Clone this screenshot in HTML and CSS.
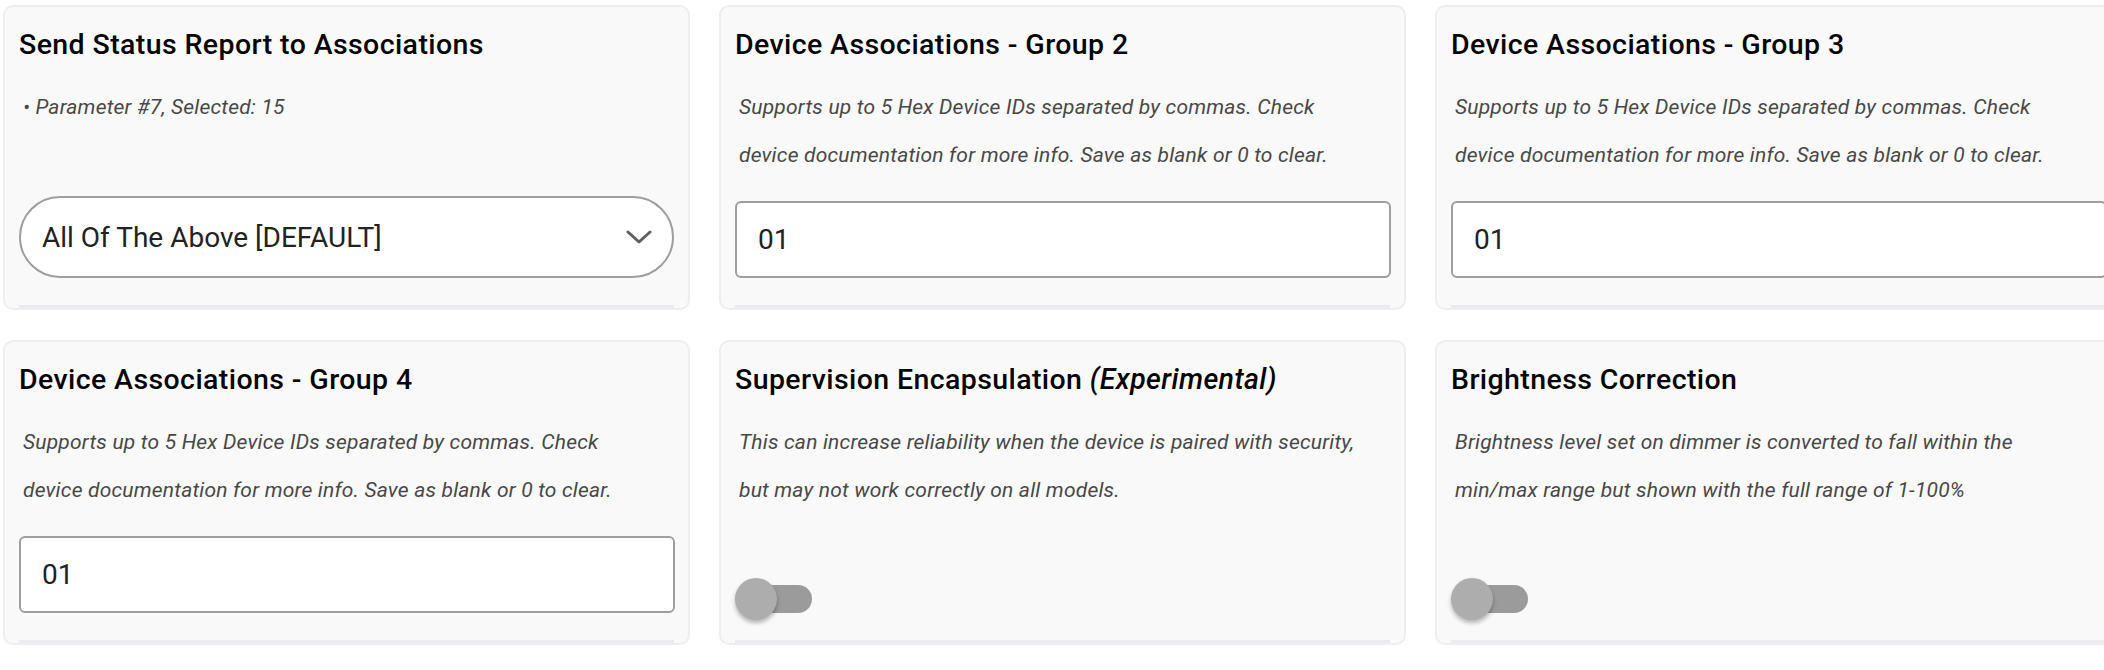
FILE: index.html
```html
<!DOCTYPE html>
<html lang="en">
<head>
<meta charset="utf-8">
<title>Device Settings</title>
<link rel="stylesheet" href="styles.css">
</head>
<body>
<div class="grid">
  <section class="card">
    <h3 class="title">Send Status Report to Associations</h3>
    <p class="desc desc-param">• Parameter #7, Selected: 15</p>
    <div class="control">
      <div class="select">
        <span class="select-value">All Of The Above [DEFAULT]</span>
        <svg class="chevron" width="26" height="14" viewBox="0 0 26 14"><path d="M2 2 L13 12 L24 2" fill="none" stroke="#5f5f5f" stroke-width="3" stroke-linecap="round" stroke-linejoin="round"/></svg>
      </div>
    </div>
    <div class="card-foot"></div>
  </section>

  <section class="card">
    <h3 class="title">Device Associations - Group 2</h3>
    <p class="desc">Supports up to 5 Hex Device IDs separated by commas. Check device documentation for more info. Save as blank or 0 to clear.</p>
    <div class="control">
      <div class="input">01</div>
    </div>
    <div class="card-foot"></div>
  </section>

  <section class="card">
    <h3 class="title">Device Associations - Group 3</h3>
    <p class="desc">Supports up to 5 Hex Device IDs separated by commas. Check device documentation for more info. Save as blank or 0 to clear.</p>
    <div class="control">
      <div class="input">01</div>
    </div>
    <div class="card-foot"></div>
  </section>

  <section class="card">
    <h3 class="title">Device Associations - Group 4</h3>
    <p class="desc">Supports up to 5 Hex Device IDs separated by commas. Check device documentation for more info. Save as blank or 0 to clear.</p>
    <div class="control">
      <div class="input">01</div>
    </div>
    <div class="card-foot"></div>
  </section>

  <section class="card">
    <h3 class="title">Supervision Encapsulation <em>(Experimental)</em></h3>
    <p class="desc">This can increase reliability when the device is paired with security, but may not work correctly on all models.</p>
    <div class="control control-switch">
      <div class="switch"><span class="track"></span><span class="thumb"></span></div>
    </div>
    <div class="card-foot"></div>
  </section>

  <section class="card">
    <h3 class="title">Brightness Correction</h3>
    <p class="desc">Brightness level set on dimmer is converted to fall within the min/max range but shown with the full range of 1-100%</p>
    <div class="control control-switch">
      <div class="switch"><span class="track"></span><span class="thumb"></span></div>
    </div>
    <div class="card-foot"></div>
  </section>
</div>
</body>
</html>
```

FILE: styles.css
```css
html, body {
  margin: 0;
  padding: 0;
  background: #ffffff;
  overflow: hidden;
}

body {
  font-family: Roboto, "Liberation Sans", sans-serif;
  color: #000;
}

.grid {
  display: grid;
  grid-template-columns: repeat(3, 687px);
  grid-auto-rows: 305px;
  column-gap: 29px;
  row-gap: 30px;
  padding: 5px 0 0 3px;
  width: 2200px;
}

.card {
  box-sizing: border-box;
  background: #f9f9f9;
  border: 2px solid #eeeeee;
  border-radius: 10px;
  padding: 0 14px;
  display: flex;
  flex-direction: column;
  overflow: hidden;
}

.title {
  margin: 21px 0 0 0;
  font-size: 28.5px;
  line-height: 34px;
  font-weight: 500;
  letter-spacing: 0.4px;
  color: #050505;
  white-space: nowrap;
}

.title em {
  font-style: italic;
  font-weight: 500;
}

.desc {
  margin: 21px 0 0 0;
  padding: 0 24px 0 4px;
  font-size: 21px;
  line-height: 48px;
  font-style: italic;
  letter-spacing: 0.2px;
  color: #484848;
}

.desc-param {
  font-size: 21px;
  letter-spacing: 0.2px;
}

.control {
  margin-top: auto;
  margin-bottom: 27px;
}

.control-switch {
  margin-bottom: 20px;
}

.select {
  box-sizing: border-box;
  height: 82px;
  border: 2px solid #9e9e9e;
  border-radius: 41px;
  background: #ffffff;
  display: flex;
  align-items: center;
  justify-content: space-between;
  padding: 0 20px 0 21px;
}

.select-value {
  font-size: 28px;
  color: #222222;
}

.chevron {
  display: block;
}

.input {
  box-sizing: border-box;
  height: 77px;
  border: 2px solid #9e9e9e;
  border-radius: 6px;
  background: #ffffff;
  display: flex;
  align-items: center;
  padding: 0 21px;
  font-size: 28px;
  color: #222222;
  width: 656px;
}

.switch {
  position: relative;
  width: 77px;
  height: 42px;
}

.track {
  position: absolute;
  left: 7px;
  top: 7px;
  width: 70px;
  height: 28px;
  border-radius: 14px;
  background: #9b9b9b;
}

.thumb {
  position: absolute;
  left: 0;
  top: 0;
  width: 42px;
  height: 42px;
  border-radius: 50%;
  background: #adadad;
  box-shadow: 0 3px 4px rgba(0, 0, 0, 0.28);
}

.card-foot {
  height: 3px;
  background: #ebebef;
  flex: none;
}
```
